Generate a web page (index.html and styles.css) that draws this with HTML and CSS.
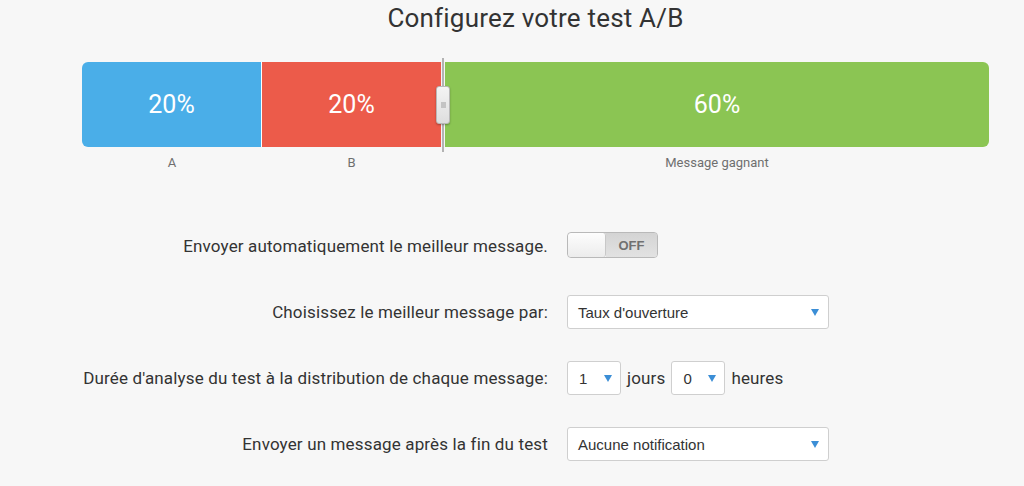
FILE: index.html
```html
<!DOCTYPE html>
<html lang="fr">
<head>
<meta charset="utf-8">
<title>Configurez votre test A/B</title>
<link rel="stylesheet" href="styles.css">
</head>
<body>
<div class="page">
  <h1 class="title">Configurez votre test A/B</h1>

  <div class="split">
    <div class="bar">
      <div class="seg seg-a">20%</div>
      <div class="seg seg-b">20%</div>
      <div class="sep"><span class="handle"><span class="grip"></span></span></div>
      <div class="seg seg-win">60%</div>
    </div>
    <div class="bar-labels">
      <div class="lab lab-a">A</div>
      <div class="lab lab-b">B</div>
      <div class="lab lab-sep"></div>
      <div class="lab lab-win">Message gagnant</div>
    </div>
  </div>

  <div class="form">
    <div class="row">
      <div class="label">Envoyer automatiquement le meilleur message.</div>
      <div class="ctrl">
        <div class="toggle"><span class="knob"></span><span class="off">OFF</span></div>
      </div>
    </div>
    <div class="row">
      <div class="label">Choisissez le meilleur message par:</div>
      <div class="ctrl">
        <div class="select wide"><span>Taux d'ouverture</span><span class="arrow"></span></div>
      </div>
    </div>
    <div class="row">
      <div class="label">Durée d'analyse du test à la distribution de chaque message:</div>
      <div class="ctrl">
        <div class="select small"><span>1</span><span class="arrow"></span></div>
        <span class="unit">jours</span>
        <div class="select small"><span>0</span><span class="arrow"></span></div>
        <span class="unit">heures</span>
      </div>
    </div>
    <div class="row">
      <div class="label">Envoyer un message après la fin du test</div>
      <div class="ctrl">
        <div class="select wide"><span>Aucune notification</span><span class="arrow"></span></div>
      </div>
    </div>
  </div>
</div>
</body>
</html>
```

FILE: styles.css
```css
* { box-sizing: border-box; }
html, body { margin: 0; padding: 0; }
body {
  background: #f7f7f7;
  font-family: Roboto, "Liberation Sans", sans-serif;
  color: #333;
  height: 486px;
  overflow: hidden;
}
.page {
  width: 907px;
  margin-left: 82px;
}
.title {
  margin: 0;
  padding-top: 3px;
  font-size: 26px;
  line-height: 30px;
  font-weight: 400;
  text-align: center;
  color: #333;
  letter-spacing: 0.2px;
}
.split { margin-top: 29px; }
.bar {
  display: flex;
  height: 85px;
  border-radius: 6px;
}
.seg {
  display: flex;
  align-items: center;
  justify-content: center;
  color: #fff;
  font-size: 25px;
}
.seg-a {
  width: 180px;
  background: #4aaee8;
  border-right: 1px solid #fff;
  border-radius: 6px 0 0 6px;
}
.seg-b {
  width: 179px;
  background: #ec5b4a;
}
.sep {
  width: 4px;
  position: relative;
  background: #f4f4f4;
}
.sep::before {
  content: "";
  position: absolute;
  left: 1px;
  width: 2px;
  top: -4px;
  bottom: -5px;
  background: #b3b3b3;
}
.handle {
  position: absolute;
  left: -5px;
  top: 24px;
  width: 14px;
  height: 38px;
  background: linear-gradient(#f4f4f4, #dedede);
  border: 1px solid #b8b8b8;
  border-radius: 3px;
  box-shadow: 0 1px 2px rgba(0,0,0,0.3);
  display: flex;
  align-items: center;
  justify-content: center;
}
.grip {
  width: 5px;
  height: 6px;
  background: #c4c4c4;
}
.seg-win {
  flex: 1;
  background: #8bc553;
  border-radius: 0 6px 6px 0;
}
.bar-labels {
  display: flex;
  margin-top: 9px;
  font-size: 13px;
  line-height: 14px;
  color: #6f6f6f;
}
.lab { text-align: center; }
.lab-a { width: 180px; }
.lab-b { width: 179px; }
.lab-sep { width: 4px; }
.lab-win { flex: 1; }

.form {
  margin-top: 59px;
  display: flex;
  flex-direction: column;
  gap: 32px;
}
.row {
  display: grid;
  grid-template-columns: 466px 1fr;
  column-gap: 19px;
  align-items: center;
  height: 34px;
}
.label {
  text-align: right;
  font-size: 17px;
  letter-spacing: 0.15px;
  color: #333;
  white-space: nowrap;
}
.ctrl {
  display: flex;
  align-items: center;
}
.toggle {
  display: flex;
  width: 91px;
  height: 26px;
  border: 1px solid #b9b9b9;
  border-radius: 4px;
  overflow: hidden;
  box-shadow: inset 0 1px 2px rgba(0,0,0,0.15);
  margin-top: -2px;
}
.knob {
  width: 38px;
  background: linear-gradient(#fdfdfd, #ececec);
  border-right: 1px solid #c8c8c8;
  border-radius: 3px;
}
.off {
  flex: 1;
  display: flex;
  align-items: center;
  justify-content: center;
  background: linear-gradient(#d4d4d4, #e2e2e2);
  font-family: "Liberation Sans", Arial, sans-serif;
  font-weight: 700;
  font-size: 13px;
  color: #707070;
}
.select {
  display: flex;
  align-items: center;
  justify-content: space-between;
  height: 34px;
  background: #fff;
  border: 1px solid #cfcfcf;
  border-radius: 3px;
  font-family: "Liberation Sans", Arial, sans-serif;
  font-size: 15px;
  color: #333;
  padding: 0 9px 0 10px;
}
.select.wide { width: 262px; }
.select.small { width: 54px; padding-right: 8px; padding-left: 11px; }
.arrow {
  width: 0;
  height: 0;
  border-left: 4px solid transparent;
  border-right: 4px solid transparent;
  border-top: 7px solid #3b8ed6;
  margin-top: 1px;
}
.unit {
  font-size: 17px;
  letter-spacing: 0.15px;
  color: #333;
  margin: 0 6px 0 6px;
}
```
